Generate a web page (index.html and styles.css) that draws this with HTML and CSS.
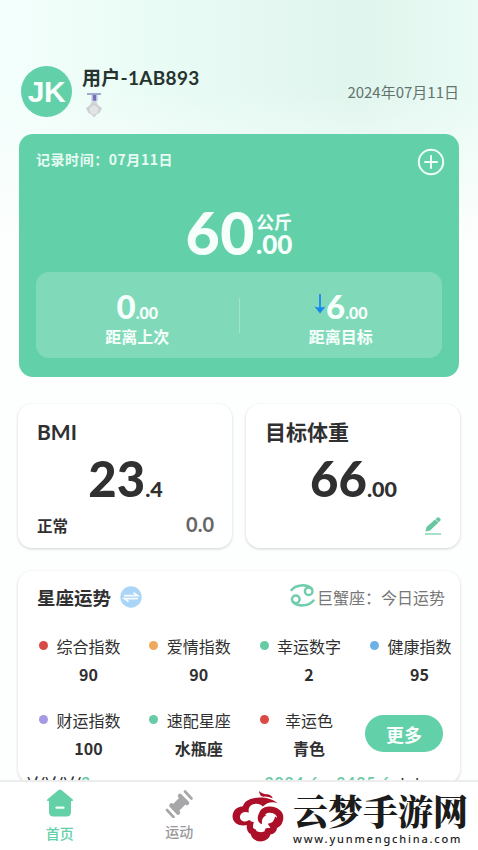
FILE: index.html
```html
<!DOCTYPE html>
<html lang="zh-CN">
<head>
<meta charset="utf-8">
<title>体重记录</title>
<link rel="stylesheet" href="styles.css">
</head>
<body>
<div class="app">
  <header class="header">
    <div class="avatar">JK</div>
    <div class="user">
      <div class="name">用户-1AB893</div>
      <svg class="medal" viewBox="0 0 18 25">
        <path d="M2 1h14" stroke="#8d93c9" stroke-width="1.6"/>
        <path d="M6.500 2h6v6h-6z" fill="#b9bce4"/>
        <path d="M8 2h3v6H8z" fill="#7470b5"/>
        <path d="M6.500 8.500Q9 6.500 11.500 8.500L13 12H5z" fill="#d4d6dc"/>
        <path d="M9 10l3.500 2 4.500 3-2.500 5-3 1.500L9 24.500 6.500 21.500l-3-1.500L1 15l4.500-3z" fill="#cdd0d3"/>
        <path d="M9 12l4.500 3-.5 4.500-4 2.500-4-2.500-.5-4.500z" fill="#e2e5e6"/>
      </svg>
    </div>
    <div class="date">2024年07月11日</div>
  </header>

  <section class="record">
    <div class="record-top">
      <span class="record-time">记录时间：07月11日</span>
      <svg class="plus" viewBox="0 0 28 28" fill="none" stroke="#effff8" stroke-width="2" stroke-linecap="round"><circle cx="14" cy="14" r="12.200"/><path d="M14 8v12M8 14h12"/></svg>
    </div>
    <div class="weight">
      <span class="weight-int">60</span>
      <span class="weight-side"><span class="unit">公斤</span><span class="weight-dec">.00</span></span>
    </div>
    <div class="diffs">
      <div class="diff">
        <div class="diff-num"><b>0</b><span>.00</span></div>
        <div class="diff-label">距离上次</div>
      </div>
      <div class="divider"></div>
      <div class="diff">
        <div class="diff-num"><svg class="down" viewBox="0 0 12 22"><path d="M6 1v15" stroke="#268ff0" stroke-width="2"/><path d="M.5 13.500Q6 15.500 11.500 13.500L6 20.500z" fill="#1687ef"/></svg><b>6</b><span>.00</span></div>
        <div class="diff-label">距离目标</div>
      </div>
    </div>
  </section>

  <div class="pair">
    <section class="card stat">
      <h2>BMI</h2>
      <div class="big"><b>23</b><span>.4</span></div>
      <div class="stat-foot"><span class="state">正常</span><span class="delta">0.0</span></div>
    </section>
    <section class="card stat">
      <h2>目标体重</h2>
      <div class="big"><b>66</b><span>.00</span></div>
      <div class="stat-foot right">
        <svg class="pencil" viewBox="0 0 18 18"><path d="M1 17h16" stroke="#74cfac" stroke-width="1.300"/><path d="M1.500 14.500l1-4.500L11 2.500l3.500 3L6 13.500z" fill="#67c7a0"/><path d="M11.500 2l2-1.600q.8-.5 1.500.1l1.500 1.500q.5.700-.1 1.400l-1.800 1.800z" fill="#67c7a0"/></svg>
      </div>
    </section>
  </div>

  <section class="card fortune">
    <div class="fortune-head">
      <h3>星座运势</h3>
      <svg class="swap" viewBox="0 0 22 22"><circle cx="11" cy="11" r="10.700" fill="#abd5f7"/><path d="M4 9.600h13.500l-4-3M18 12.600H4.500l4 3" fill="none" stroke="#f5fbff" stroke-width="1.800"/></svg>
      <div class="sign">
        <svg class="cancer" viewBox="0 0 25 23" fill="none" stroke="#70cdab" stroke-width="2.500" stroke-linecap="round"><circle cx="18.700" cy="7.300" r="3.800"/><circle cx="5.800" cy="15.200" r="3.800"/><path d="M1.500 6C6 .6 16-.4 21.500 4.500M23.500 16.500C19 22 8.500 23.400 3 18"/></svg>
        <span>巨蟹座：今日运势</span>
      </div>
    </div>
    <div class="grid">
      <div class="item"><i class="dot red"></i><span>综合指数</span><b>90</b></div>
      <div class="item"><i class="dot orange"></i><span>爱情指数</span><b>90</b></div>
      <div class="item"><i class="dot green"></i><span>幸运数字</span><b>2</b></div>
      <div class="item"><i class="dot blue"></i><span>健康指数</span><b>95</b></div>
      <div class="item"><i class="dot purple"></i><span>财运指数</span><b>100</b></div>
      <div class="item"><i class="dot green"></i><span>速配星座</span><b>水瓶座</b></div>
      <div class="item"><i class="dot red"></i><span>幸运色</span><b>青色</b></div>
      <button class="more">更多</button>
    </div>
    <div class="peek"><span>\(/\(/\(/<em>2</em></span><span><em class="range">2024.6 - 2425.6</em> <small>大卡</small></span></div>
  </section>

  <nav class="tabs">
    <div class="tab active">
      <svg class="home" viewBox="0 0 28 28"><path d="M12.300 1.200Q14 0 15.700 1.200L26.800 10.500q1 1.500-.8 1.500h-1v11q0 4.500-4.500 4.500h-13Q3 27.500 3 23V12H2q-1.800 0-.8-1.500z" fill="#63d0a8"/><path d="M10.500 18.700h7" stroke="#f4fffa" stroke-width="2.200" stroke-linecap="round"/></svg>
      <span>首页</span>
    </div>
    <div class="tab">
      <svg class="sport" viewBox="0 0 28 28" fill="none" stroke="#a7a7a9"><path d="M2 20l6.500 7M20 1.500l6.500 7" stroke-width="2.600" stroke-linecap="round"/><path d="M6.500 15.500l6.500 7M15 6l7 7" stroke-width="4.500" stroke-linecap="round"/><path d="M9 19.500L19.500 9" stroke-width="9"/></svg>
      <span>运动</span>
    </div>
    <div class="brand">
      <svg class="cloud" viewBox="50 30 160 160">
        <path fill="#ac1029" d="M132 33Q140 42 155 43Q169 44 173 55Q158 49 145 50Q132 49 132 33Z"/>
        <path fill="#ac1029" d="M188 70C160 45 91 46 83 79C58 81 50 99 52 114C55 134 78 142 101 134L106 120C88 130 73 123 74 110C75 99 87 93 101 98C94 72 130 63 143 80C156 66 173 64 188 70Z"/>
        <path fill="none" stroke="#ac1029" stroke-width="19" stroke-linejoin="round" d="M107 124C102 139 102 153 115 156C115 181 157 185 158 154C178 157 178 141 175 139C198 132 200 108 188 98C174 85 145 86 140 105"/>
        <path fill="#ac1029" d="M131 101C124 116 128 130 141 133C138 119 144 110 154 106ZM115 150Q136 165 160 150L158 168Q138 182 118 168ZM158 132Q177 130 180 110L194 120 184 145 170 151Z"/>
      </svg>
      <div class="brand-text"><div class="brand-name">云梦手游网</div><div class="brand-url">www.yunmengchina.com</div></div>
    </div>
  </nav>
</div>
</body>
</html>
```

FILE: styles.css
```css
* { box-sizing: border-box; margin: 0; padding: 0; }
body {
  width: 478px; height: 850px; overflow: hidden;
  font-family: "Noto Sans CJK SC", sans-serif; color: #303030; background: #fdfefe;
}
svg { display: block; flex: none; }
.app {
  height: 850px; display: flex; flex-direction: column; overflow: hidden;
  background:
    linear-gradient(180deg, transparent 0, transparent 90px, #fdfefe 240px),
    linear-gradient(90deg, #f3fffc 0, #e6faf3 45%, #e0f5ed 75%, #e9fbf4 100%);
}

.header { display: flex; height: 134px; padding: 66px 19px 0 21px; flex: none; }
.avatar {
  width: 51px; height: 51px; border-radius: 50%; background: #62d0a8; color: #f8fffc;
  font: bold 30px/52px "Liberation Sans", sans-serif; text-align: center; letter-spacing: -.5px;
}
.user { padding-left: 10px; }
.name { font: bold 19px/24px Lato, "Noto Sans CJK SC", sans-serif; color: #26332f; letter-spacing: .3px; }
.medal { width: 18px; height: 25px; margin: 3px 0 0 3px; }
.date { margin-left: auto; font-size: 15px; line-height: 52px; color: #65736f; }

.record {
  flex: none; height: 243px; margin: 0 19px; padding: 14px 17px 0;
  border-radius: 14px; background: #62d0a8; color: #f6fffb;
}
.record-top { display: flex; justify-content: space-between; height: 28px; }
.record-time { font-size: 14px; line-height: 23px; font-weight: bold; letter-spacing: .55px; color: #e7fbf3; }
.plus { width: 28px; height: 28px; margin-right: -3px; }
.weight { display: flex; justify-content: center; height: 96px; padding-top: 26px; }
.weight-int { font: 900 59px/62px Lato, sans-serif; letter-spacing: .5px; }
.weight-side { display: flex; flex-direction: column; font-weight: bold; margin-left: 1px; }
.unit { font-size: 18px; line-height: 24px; margin-top: 7px; }
.weight-dec { font: 900 26px/23px Lato, sans-serif; }
.diffs { display: flex; align-items: center; height: 86px; border-radius: 13px; background: #80dab9; }
.diff { flex: 1; text-align: center; padding-top: 8px; }
.divider { width: 1px; height: 35px; background: #a3e4cb; }
.diff-num { display: flex; justify-content: center; align-items: baseline; height: 35px; line-height: 35px; }
.diff-num b { font: 900 33px/35px Lato, sans-serif; }
.diff-num span { font: 900 16px/35px Lato, sans-serif; }
.down { width: 12px; height: 22px; align-self: flex-start; margin-top: 4px; }
.diff-label { font-size: 16px; line-height: 25px; font-weight: bold; }

.card { background: #fff; border-radius: 14px; box-shadow: 0 1px 3px rgba(0,0,0,.18); }
.pair { display: flex; flex: none; gap: 14px; margin: 27px 18px 0; }
.stat { flex: 1; height: 144px; padding: 15px 18px 0 19px; }
.stat h2 { font: bold 21px/26px Lato, "Noto Sans CJK SC", sans-serif; }
.big { display: flex; justify-content: center; align-items: baseline; height: 66px; }
.big b { font: 900 49px/66px Lato, sans-serif; }
.big span { font: 900 21.500px/66px Lato, sans-serif; }
.stat-foot { display: flex; justify-content: space-between; align-items: center; height: 28px; }
.stat-foot.right { justify-content: flex-end; }
.state { font-size: 15.500px; font-weight: bold; }
.delta { font: bold 20px/26px Lato, sans-serif; color: #666; padding-bottom: 2px; }
.pencil { width: 18px; height: 18px; margin-top: 2px; }

.fortune { flex: none; height: 212px; margin: 23px 18px 0; padding-top: 12px; }
.fortune-head { display: flex; align-items: center; height: 28px; padding: 0 15px 0 19px; }
.fortune-head h3 { font-size: 18.500px; line-height: 28px; }
.swap { width: 22px; height: 22px; margin-left: 9px; margin-top: -1px; }
.sign { display: flex; align-items: center; margin-left: auto; font-size: 16px; color: #777; }
.cancer { width: 25px; height: 23px; margin: -3px 2px 0 0; }
.grid { display: grid; grid-template-columns: repeat(4, 110.300px); grid-auto-rows: 74px; padding: 22px 0 0 21px; height: 169px; }
.item { display: grid; grid-template-columns: 9px 63px; grid-template-rows: 25px 31px; column-gap: 9px; align-items: center; justify-items: center; font-size: 16px; white-space: nowrap; }
.item b { grid-column: 2; }
.dot { width: 9px; height: 9px; border-radius: 50%; }
.red { background: #db4945; }
.orange { background: #f0a85c; }
.green { background: #67cba5; }
.blue { background: #6db2e6; }
.purple { background: #a699e3; }
.more {
  justify-self: start; width: 78px; height: 37px; margin: 8px 0 0 -5px; border: 0; border-radius: 19px;
  background: #62d0a8; color: #f9fffc; font: bold 18px/36px "Noto Sans CJK SC", sans-serif;
}
.peek { display: flex; justify-content: space-between; height: 20px; margin-top: -8px; padding: 0 35px 0 9px; font: bold 15px/20px Lato, sans-serif; }
.peek em { font-style: normal; color: #67cba5; }
.peek small { position: relative; top: 3px; font: 500 15px/20px "Noto Sans CJK SC", sans-serif; }
.range { letter-spacing: 1.3px; }

.tabs { position: relative; display: flex; flex: none; height: 70px; margin-top: -3px; background: #fff; border-top: 2px solid #ededed; }
.tab { width: 119.500px; display: flex; flex-direction: column; align-items: center; padding-top: 8px; font-size: 14px; line-height: 20px; color: #99999b; font-weight: 500; }
.tab.active { padding-top: 7px; color: #63d0a8; }
.home { width: 28px; height: 28px; margin-bottom: 6px; }
.sport { width: 28px; height: 28px; margin-bottom: 3px; }
.brand { flex: 1; display: flex; }
.cloud { width: 53px; height: 53px; margin: 8px 0 0 -7px; }
.brand-text { padding: 8px 0 0 8px; white-space: nowrap; }
.brand-name { font-family: "Noto Serif CJK SC", "Noto Sans CJK SC", serif; font-weight: 900; font-size: 35px; line-height: 40px; height: 42px; color: #1b1b1b; }
.brand-url { font: 500 11px/14px "Noto Sans", sans-serif; letter-spacing: 1.800px; color: #222; }
```
